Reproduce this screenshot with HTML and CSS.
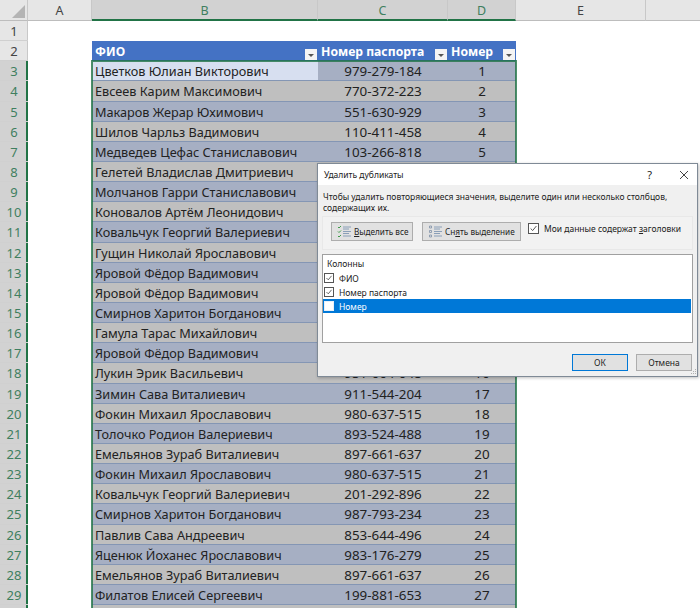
FILE: index.html
```html
<!DOCTYPE html>
<html lang="ru">
<head>
<meta charset="utf-8">
<title>Удалить дубликаты</title>
<link rel="stylesheet" href="styles.css">
</head>
<body>
<div class="sheet">
  <div class="ch corner"><svg width="28" height="21" viewBox="0 0 28 21"><path d="M25 5V18H12Z" fill="#b4b4b4"/></svg></div>
  <div class="ch">A</div><div class="ch sel">B</div><div class="ch sel">C</div><div class="ch sel">D</div><div class="ch">E</div><div class="ch last"></div>

  <div class="rh">1</div><div class="blank"></div><div class="blank"></div><div class="blank"></div><div class="blank"></div><div class="blank"></div><div class="blank"></div>

  <div class="rh">2</div><div class="blank"></div>
  <div class="th">ФИО<span class="fb"></span></div><div class="th">Номер паспорта<span class="fb"></span></div><div class="th">Номер<span class="fb"></span></div>
  <div class="blank"></div><div class="blank"></div>

  <div class="rh on">3</div><div class="blank"></div><div class="td a b act">Цветков Юлиан Викторович</div><div class="td a c">979-279-184</div><div class="td a c">1</div><div class="blank"></div><div class="blank"></div>
  <div class="rh on">4</div><div class="blank"></div><div class="td g b">Евсеев Карим Максимович</div><div class="td g c">770-372-223</div><div class="td g c">2</div><div class="blank"></div><div class="blank"></div>
  <div class="rh on">5</div><div class="blank"></div><div class="td a b">Макаров Жерар Юхимович</div><div class="td a c">551-630-929</div><div class="td a c">3</div><div class="blank"></div><div class="blank"></div>
  <div class="rh on">6</div><div class="blank"></div><div class="td g b">Шилов Чарльз Вадимович</div><div class="td g c">110-411-458</div><div class="td g c">4</div><div class="blank"></div><div class="blank"></div>
  <div class="rh on">7</div><div class="blank"></div><div class="td a b">Медведев Цефас Станиславович</div><div class="td a c">103-266-818</div><div class="td a c">5</div><div class="blank"></div><div class="blank"></div>
  <div class="rh on">8</div><div class="blank"></div><div class="td g b">Гелетей Владислав Дмитриевич</div><div class="td g c"></div><div class="td g c"></div><div class="blank"></div><div class="blank"></div>
  <div class="rh on">9</div><div class="blank"></div><div class="td a b">Молчанов Гарри Станиславович</div><div class="td a c"></div><div class="td a c"></div><div class="blank"></div><div class="blank"></div>
  <div class="rh on">10</div><div class="blank"></div><div class="td g b">Коновалов Артём Леонидович</div><div class="td g c"></div><div class="td g c"></div><div class="blank"></div><div class="blank"></div>
  <div class="rh on">11</div><div class="blank"></div><div class="td a b">Ковальчук Георгий Валериевич</div><div class="td a c"></div><div class="td a c"></div><div class="blank"></div><div class="blank"></div>
  <div class="rh on">12</div><div class="blank"></div><div class="td g b">Гущин Николай Ярославович</div><div class="td g c"></div><div class="td g c"></div><div class="blank"></div><div class="blank"></div>
  <div class="rh on">13</div><div class="blank"></div><div class="td a b">Яровой Фёдор Вадимович</div><div class="td a c"></div><div class="td a c"></div><div class="blank"></div><div class="blank"></div>
  <div class="rh on">14</div><div class="blank"></div><div class="td g b">Яровой Фёдор Вадимович</div><div class="td g c"></div><div class="td g c"></div><div class="blank"></div><div class="blank"></div>
  <div class="rh on">15</div><div class="blank"></div><div class="td a b">Смирнов Харитон Богданович</div><div class="td a c"></div><div class="td a c"></div><div class="blank"></div><div class="blank"></div>
  <div class="rh on">16</div><div class="blank"></div><div class="td g b">Гамула Тарас Михайлович</div><div class="td g c"></div><div class="td g c"></div><div class="blank"></div><div class="blank"></div>
  <div class="rh on">17</div><div class="blank"></div><div class="td a b">Яровой Фёдор Вадимович</div><div class="td a c"></div><div class="td a c"></div><div class="blank"></div><div class="blank"></div>
  <div class="rh on">18</div><div class="blank"></div><div class="td g b">Лукин Эрик Васильевич</div><div class="td g c">951-664-048</div><div class="td g c">16</div><div class="blank"></div><div class="blank"></div>
  <div class="rh on">19</div><div class="blank"></div><div class="td a b">Зимин Сава Виталиевич</div><div class="td a c">911-544-204</div><div class="td a c">17</div><div class="blank"></div><div class="blank"></div>
  <div class="rh on">20</div><div class="blank"></div><div class="td g b">Фокин Михаил Ярославович</div><div class="td g c">980-637-515</div><div class="td g c">18</div><div class="blank"></div><div class="blank"></div>
  <div class="rh on">21</div><div class="blank"></div><div class="td a b">Толочко Родион Валериевич</div><div class="td a c">893-524-488</div><div class="td a c">19</div><div class="blank"></div><div class="blank"></div>
  <div class="rh on">22</div><div class="blank"></div><div class="td g b">Емельянов Зураб Виталиевич</div><div class="td g c">897-661-637</div><div class="td g c">20</div><div class="blank"></div><div class="blank"></div>
  <div class="rh on">23</div><div class="blank"></div><div class="td a b">Фокин Михаил Ярославович</div><div class="td a c">980-637-515</div><div class="td a c">21</div><div class="blank"></div><div class="blank"></div>
  <div class="rh on">24</div><div class="blank"></div><div class="td g b">Ковальчук Георгий Валериевич</div><div class="td g c">201-292-896</div><div class="td g c">22</div><div class="blank"></div><div class="blank"></div>
  <div class="rh on">25</div><div class="blank"></div><div class="td a b">Смирнов Харитон Богданович</div><div class="td a c">987-793-234</div><div class="td a c">23</div><div class="blank"></div><div class="blank"></div>
  <div class="rh on">26</div><div class="blank"></div><div class="td g b">Павлив Сава Андреевич</div><div class="td g c">853-644-496</div><div class="td g c">24</div><div class="blank"></div><div class="blank"></div>
  <div class="rh on">27</div><div class="blank"></div><div class="td a b">Яценюк Йоханес Ярославович</div><div class="td a c">983-176-279</div><div class="td a c">25</div><div class="blank"></div><div class="blank"></div>
  <div class="rh on">28</div><div class="blank"></div><div class="td g b">Емельянов Зураб Виталиевич</div><div class="td g c">897-661-637</div><div class="td g c">26</div><div class="blank"></div><div class="blank"></div>
  <div class="rh on">29</div><div class="blank"></div><div class="td a b">Филатов Елисей Сергеевич</div><div class="td a c">199-881-653</div><div class="td a c">27</div><div class="blank"></div><div class="blank"></div>
  <div class="rh on"></div><div class="blank"></div><div class="td g b"></div><div class="td g c"></div><div class="td g c"></div><div class="blank"></div><div class="blank"></div>
  <div class="selection"></div>
</div>

<div class="dialog">
  <div class="titlebar">
    <span class="title">Удалить дубликаты</span>
    <span class="help">?</span>
    <svg class="close" width="10" height="10" viewBox="0 0 10 10"><path d="M1 1L9 9M9 1L1 9" stroke="#444" stroke-width="1" fill="none"/></svg>
  </div>
  <div class="body">
    <p class="intro">Чтобы удалить повторяющиеся значения, выделите один или несколько столбцов, содержащих их.</p>
    <div class="tools">
      <div class="btn tool">
        <svg width="14" height="13" viewBox="0 0 14 13"><path d="M1 2l1 1 2-2M1 6.5l1 1 2-2M1 11l1 1 2-2" stroke="#3f9a4a" stroke-width="1" fill="none"/><path d="M6 2h8M6 4h6M6 6.5h8M6 8.5h6M6 11h8" stroke="#8a9fb8" stroke-width="1"/></svg>
        <span class="tool-label"><u>В</u>ыделить все</span>
      </div>
      <div class="btn tool wide">
        <svg width="14" height="13" viewBox="0 0 14 13"><path d="M1.5 1h2v2h-2zM1.5 5.5h2v2h-2zM1.5 10h2v2h-2z" stroke="#7d8fa6" stroke-width=".8" fill="none"/><path d="M6 2h8M6 4h6M6 6.5h8M6 8.5h6M6 11h8" stroke="#8a9fb8" stroke-width="1"/></svg>
        <span class="tool-label">Сн<u>я</u>ть выделение</span>
      </div>
      <div class="check"><span class="cb big"><svg viewBox="0 0 11 11"><path d="M2 5.5l2.500 2.500 4.500-5.500" stroke="#333" stroke-width="1" fill="none"/></svg></span><span class="head-label">Мои данные содержат <u>з</u>аголовки</span></div>
    </div>
    <div class="list">
      <div class="list-head">Колонны</div>
      <div class="item"><span class="cb"><svg viewBox="0 0 11 11"><path d="M2 5.5l2.500 2.500 4.500-5.500" stroke="#333" stroke-width="1" fill="none"/></svg></span>ФИО</div>
      <div class="item"><span class="cb"><svg viewBox="0 0 11 11"><path d="M2 5.5l2.500 2.500 4.500-5.500" stroke="#333" stroke-width="1" fill="none"/></svg></span>Номер паспорта</div>
      <div class="item picked"><span class="cb"></span>Номер</div>
    </div>
    <div class="actions">
      <div class="btn act-btn ok">ОК</div>
      <div class="btn act-btn">Отмена</div>
    </div>
  </div>
  <svg class="grip" width="8" height="8" viewBox="0 0 8 8"><path d="M6 1h1v1H6zM4 3h1v1H4zM6 3h1v1H6zM2 5h1v1H2zM4 5h1v1H4zM6 5h1v1H6z" fill="#b0b0b0"/></svg>
</div>
</body>
</html>
```

FILE: styles.css
```css
html, body { margin: 0; padding: 0; }
body { width: 700px; height: 608px; overflow: hidden; position: relative; background: #fff; font-family: "Noto Sans", sans-serif; }

.sheet {
  display: grid;
  grid-template-columns: 28px 64px 226px 130px 68px 130px 54px;
  grid-template-rows: 21px repeat(30, 20.15px);
  color: #222;
  font-size: 13px;
  position: relative;
}
.ch {
  background: #e6e6e6;
  border-right: 1px solid #c8c8c8;
  border-bottom: 1px solid #bdbdbd;
  box-sizing: border-box;
  text-align: center;
  font-size: 12.5px;
  line-height: 22px;
  color: #444;
}
.ch.sel { background: #d2d2d2; color: #3f7f5f; border-bottom: 2px solid #217346; }
.ch.last { border-right: 0; }
.corner { line-height: 0; overflow: hidden; }
.rh {
  background: #e6e6e6;
  border-bottom: 1px solid #d0d0d0;
  box-shadow: inset -1px 0 #c8c8c8;
  box-sizing: border-box;
  text-align: center;
  font-size: 13px;
  line-height: 20px;
  color: #444;
}
.rh.on { background: #d2d2d2; color: #3f7f5f; box-shadow: inset -2px 0 #217346; }
.blank { background: #fff; }
.th {
  background: #4472c4;
  color: #fff;
  font-weight: 700;
  font-size: 12.2px;
  line-height: 21px;
  padding-left: 3px;
  position: relative;
  white-space: nowrap;
}
.fb {
  position: absolute;
  right: 1px;
  top: 8px;
  width: 12px;
  height: 11px;
  background: #f4f4f4;
}
.fb::after {
  content: "";
  position: absolute;
  left: 3px;
  top: 5px;
  border: 3px solid transparent;
  border-top: 3px solid #555;
  border-bottom: 0;
}
.td {
  font-size: 12.7px;
  line-height: 20px;
  white-space: nowrap;
  overflow: hidden;
  border-bottom: 1px solid #8496b4;
  box-sizing: border-box;
  color: #222;
}
.td.a { background: #a6afc3; }
.td.g { background: #bfbfbf; }
.td.b { padding-left: 3px; }
.td.c { text-align: center; font-size: 13.4px; }
.td.act { background: #d7dff0; }
.selection {
  position: absolute;
  left: 91px;
  top: 60px;
  width: 422px;
  height: 560px;
  border: 2px solid #217346;
  opacity: .8;
}

.dialog {
  position: absolute;
  left: 317px;
  top: 163px;
  width: 381px;
  height: 214px;
  box-sizing: border-box;
  background: #f0f0f0;
  border: 1px solid #7f8a96;
  box-shadow: 1px 1px 3px rgba(0,0,0,.25);
  font-size: 8.5px;
  color: #222;
}
.titlebar {
  display: flex;
  align-items: center;
  height: 21px;
  background: #fff;
  padding: 0 8px 0 6px;
}
.title { flex: 1; }
.help { font-size: 11px; margin-right: 27px; }
.body { padding: 6px 4px 0; }
.intro { margin: 0 0 3px 1px; line-height: 11px; width: 362px; }
.tools {
  display: flex;
  align-items: flex-start;
  height: 34px;
  box-sizing: border-box;
  border: 1px solid #e8e8e8;
  padding: 5px 0 0 8px;
  background: #f2f2f2;
}
.btn { background: #e1e1e1; border: 1px solid #adadad; box-sizing: border-box; }
.tool {
  display: flex;
  align-items: center;
  gap: 3px;
  height: 19px;
  width: 82px;
  padding-left: 5px;
  margin-right: 9px;
  flex: none;
}
.tool.wide { width: 99px; margin-right: 7px; }
.tool-label { white-space: nowrap; font-size: 8.2px; }
.check { display: flex; align-items: center; gap: 5px; margin-top: 1px; }
.head-label { white-space: nowrap; }
.cb {
  width: 10px;
  height: 10px;
  box-sizing: border-box;
  border: 1px solid #555;
  background: #fff;
  display: inline-block;
  flex: none;
  line-height: 0;
}
.cb.big { width: 11px; height: 11px; }
.cb svg { width: 100%; height: 100%; }
.list {
  margin-top: 4px;
  height: 89px;
  box-sizing: border-box;
  background: #fff;
  border: 1px solid #a0a0a0;
  padding: 2px 1px 0 0;
}
.list-head { line-height: 14px; padding-left: 4px; }
.item { display: flex; align-items: center; gap: 5px; height: 14px; padding-left: 1px; }
.item.picked { background: #0078d7; color: #fff; }
.item.picked .cb { border-color: #e8f0fa; }
.actions { display: flex; justify-content: flex-end; gap: 8px; margin-top: 11px; padding-right: 1px; }
.act-btn { width: 56px; height: 17px; text-align: center; line-height: 15px; }
.act-btn.ok { border: 1.5px solid #0078d7; }
.grip { position: absolute; right: 0; bottom: 0; }
```
